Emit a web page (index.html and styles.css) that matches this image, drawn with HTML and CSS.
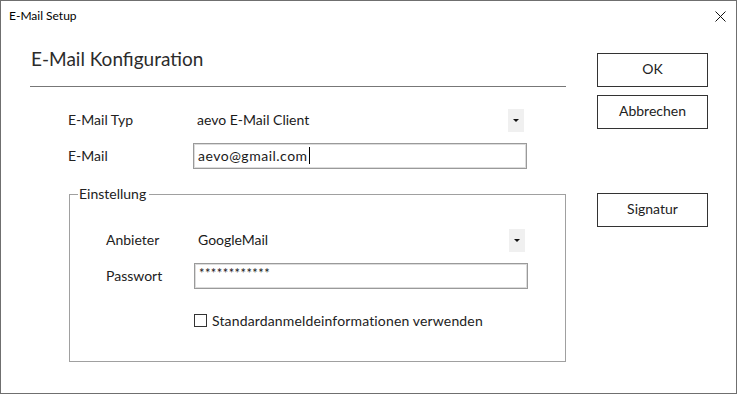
FILE: index.html
```html
<!DOCTYPE html>
<html lang="de">
<head>
    <meta charset="UTF-8">
    <title>E-Mail Setup</title>
    <link rel="stylesheet" href="styles.css">
</head>
<body>
    <div class="window">
        <div class="titlebar">
            <span class="title">E-Mail Setup</span>
            <svg class="close" width="11" height="11" viewBox="0 0 11 11">
                <path d="M0.5 0.5 L10.5 10.5 M10.5 0.5 L0.5 10.5" stroke="#111" stroke-width="1" fill="none"/>
            </svg>
        </div>

        <div class="content">
            <div class="main">
                <h1 class="heading">E-Mail Konfiguration</h1>

                <div class="form">
                    <div class="row">
                        <span class="label">E-Mail Typ</span>
                        <div class="select">
                            <span>aevo E-Mail Client</span>
                            <span class="arrow"></span>
                        </div>
                    </div>
                    <div class="row">
                        <span class="label">E-Mail</span>
                        <div class="input email">aevo@gmail.com<span class="caret"></span></div>
                    </div>
                </div>

                <fieldset class="group">
                    <legend>Einstellung</legend>
                    <div class="row">
                        <span class="label">Anbieter</span>
                        <div class="select">
                            <span>GoogleMail</span>
                            <span class="arrow"></span>
                        </div>
                    </div>
                    <div class="row">
                        <span class="label">Passwort</span>
                        <div class="input password">************</div>
                    </div>
                    <label class="check">
                        <span class="box"></span>
                        Standardanmeldeinformationen verwenden
                    </label>
                </fieldset>
            </div>

            <div class="side">
                <button class="btn">OK</button>
                <button class="btn">Abbrechen</button>
                <button class="btn signatur">Signatur</button>
            </div>
        </div>
    </div>
</body>
</html>
```

FILE: styles.css
```css
* {
    margin: 0;
    padding: 0;
    box-sizing: border-box;
}

body {
    font-family: Lato, "Open Sans", sans-serif;
    background: #fff;
    color: #1a1a1a;
}

.window {
    width: 737px;
    height: 394px;
    border: 1px solid #6f6f6f;
    background: #fff;
}

.titlebar {
    height: 30px;
    display: flex;
    align-items: center;
    justify-content: space-between;
    padding: 0 10px 2px 8px;
    font-size: 12px;
}

.title {
    color: #000;
}

.close {
    margin-top: 2px;
}

.content {
    display: flex;
}

.main {
    width: 536px;
    margin-left: 29px;
}

.heading {
    margin-top: 16px;
    padding: 0 0 15px 1px;
    font-size: 19px;
    line-height: 24px;
    font-weight: 400;
    color: #2b2b2b;
    border-bottom: 1px solid #777;
}

.form {
    margin-top: 21px;
    display: flex;
    flex-direction: column;
    gap: 10px;
}

.row {
    display: grid;
    align-items: center;
    height: 25px;
    font-size: 14px;
}

.form .row {
    padding-left: 38px;
    grid-template-columns: 125px 334px;
}

.label {
    color: #222;
    padding-bottom: 2px;
}

.select {
    display: flex;
    align-items: center;
    justify-content: space-between;
    height: 25px;
    padding: 0 3px 0 4px;
}

.select span:first-child {
    padding-bottom: 2px;
}

.arrow {
    width: 16px;
    height: 23px;
    background: #f0f0f0;
    position: relative;
}

.arrow::after {
    content: "";
    position: absolute;
    left: 5px;
    top: 10px;
    border-left: 3px solid transparent;
    border-right: 3px solid transparent;
    border-top: 3px solid #111;
}

.input {
    height: 26px;
    border: 1px solid #9a9a9a;
    box-shadow: inset 0 0 0 1px #dcdcdc;
    padding: 0 4px 2px;
    display: flex;
    align-items: center;
}

.email {
    letter-spacing: 0.5px;
}

.caret {
    display: inline-block;
    width: 1px;
    height: 17px;
    background: #000;
    margin-left: 1px;
}

.password {
    font-size: 13px;
    align-items: flex-start;
    line-height: 14px;
    padding-top: 2px;
    letter-spacing: 0.4px;
}

.group {
    margin: 18px 0 0 39px;
    width: 497px;
    border: 1px solid #a0a0a0;
    padding: 26px 0 34px 0;
    display: flex;
    flex-direction: column;
    gap: 10px;
}

.group legend {
    margin-left: 8px;
    padding: 0 3px 0 1px;
    font-size: 14px;
    line-height: 16px;
    color: #222;
}

.group .row {
    margin-left: 36px;
    grid-template-columns: 88px 334px;
}

.check {
    margin: 15px 0 0 124px;
    display: flex;
    align-items: center;
    gap: 5px;
    font-size: 14px;
    letter-spacing: 0.15px;
    height: 14px;
    color: #222;
}

.box {
    width: 13px;
    height: 13px;
    border: 1px solid #333;
    background: #fff;
}

.side {
    margin: 22px 0 0 31px;
    display: flex;
    flex-direction: column;
    gap: 8px;
}

.btn {
    width: 111px;
    height: 34px;
    border: 1px solid #333;
    background: #fff;
    font-family: Lato, "Open Sans", sans-serif;
    font-size: 14px;
    color: #222;
    padding-bottom: 3px;
}

.btn.signatur {
    margin-top: 56px;
}
```
